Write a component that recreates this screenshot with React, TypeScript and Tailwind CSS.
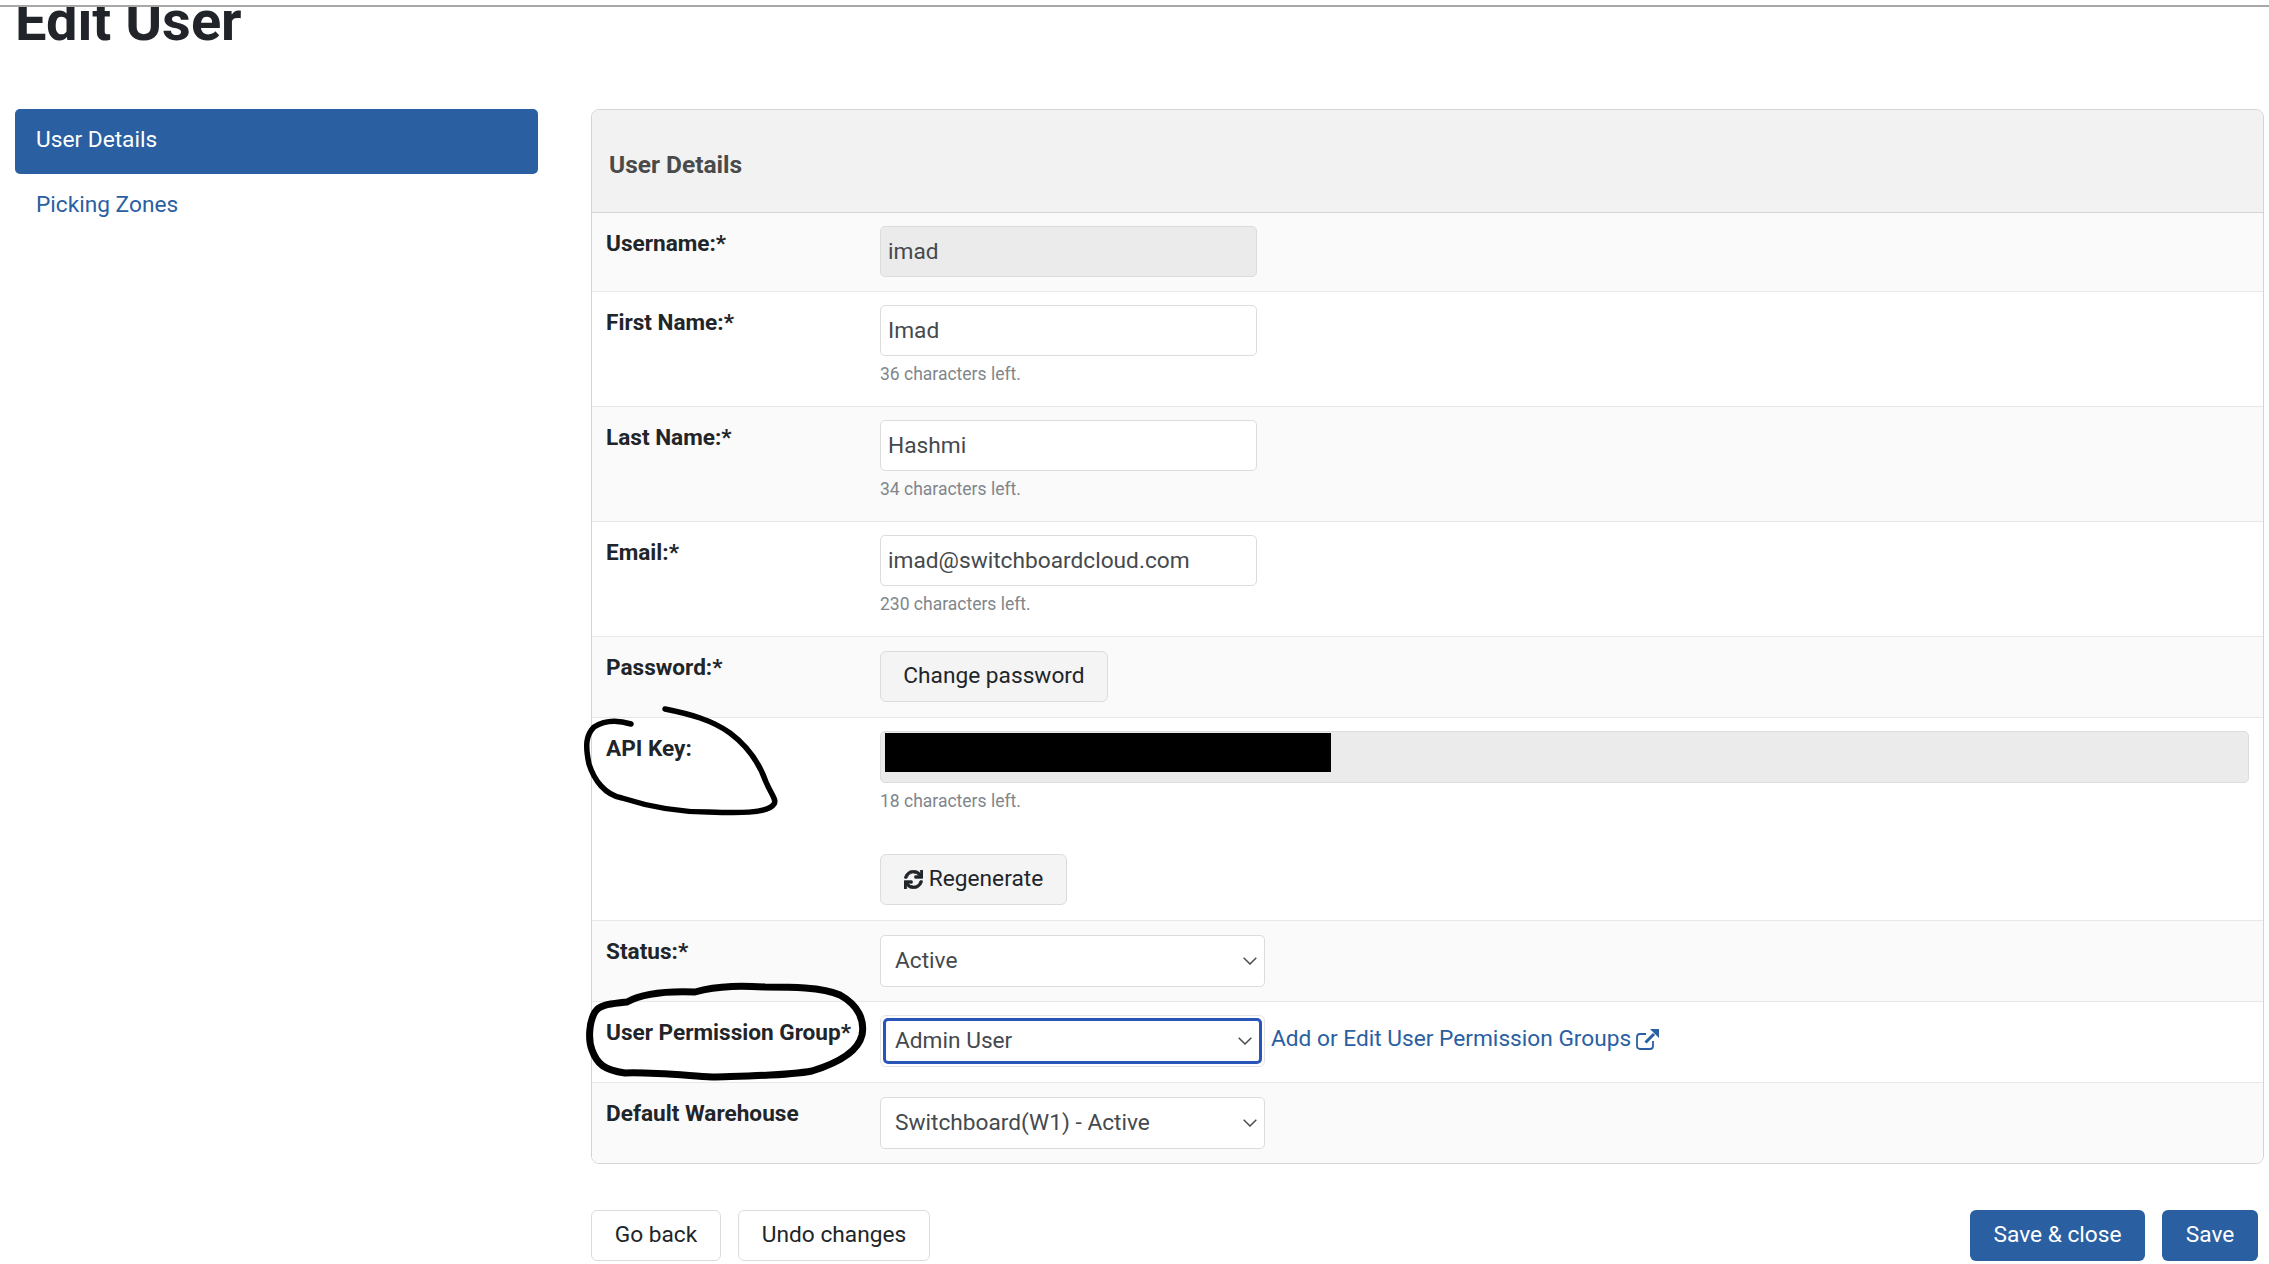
import React from 'react';
import { FaSync } from 'react-icons/fa';

const inputCls = 'block w-[377px] h-[51px] rounded-[5px] border border-[#dcdcdc] px-[7px] text-[22.7px] text-[#45494d] outline-none';
const btnCls = 'inline-flex h-[51px] items-center justify-center rounded-[6px] border border-[#dcdcdc] text-[22.7px] text-[#212529]';

function Chevron() {
  return (
    <svg className="absolute right-[7px] top-1/2 -translate-y-1/2" width="14" height="8" viewBox="0 0 14 8" fill="none">
      <path d="M.7.7 7 7 13.3.7" stroke="#4a4d50" strokeWidth="1.5" />
    </svg>
  );
}

function Select({ value }: { value: string }) {
  return (
    <div className="relative mt-[1px] flex h-[52px] w-[385px] items-center rounded-[5px] border border-[#dcdcdc] bg-white pl-[14px] text-[22.7px] text-[#45494d]">
      {value}
      <Chevron />
    </div>
  );
}

function Hint({ children }: { children: React.ReactNode }) {
  return <div className="mt-[7px] text-[17.5px] leading-[22px] text-[#80868b]">{children}</div>;
}

function Row({ label, alt, h, children }: { label: string; alt?: boolean; h: string; children: React.ReactNode }) {
  return (
    <div className={`flex border-b border-[#e8e8e8] pt-[13px] last:border-b-0 ${alt ? 'bg-[#fafafa]' : 'bg-white'} ${h}`}>
      <div className="w-[288px] shrink-0 pl-[14px] pt-[3px] text-[22.6px] font-bold leading-[30px] text-[#212529]">{label}</div>
      <div className="min-w-0 flex-1 pr-[14px]">{children}</div>
    </div>
  );
}

function TextField({ value, hint, disabled }: { value: string; hint?: string; disabled?: boolean }) {
  return (
    <>
      <input readOnly value={value} className={`${inputCls} ${disabled ? 'bg-[#ebebeb]' : 'bg-white'}`} />
      {hint && <Hint>{hint}</Hint>}
    </>
  );
}

export default function App() {
  return (
    <div className="relative h-[1264px] w-[2269px] overflow-hidden bg-white font-['Roboto',sans-serif]">
      <div className="relative z-10 h-[7px] border-b-2 border-[#a8a8a8] bg-white" />
      <h1 className="-mt-[17px] ml-[15px] text-[56px] font-bold leading-[62px] text-[#212529]">Edit User</h1>

      <div className="mt-[57px] flex pl-[15px] pr-[5px]">
        <nav className="w-[523px] shrink-0">
          <div className="flex h-[65px] items-center rounded-[5px] bg-[#2a5fa2] pb-[2px] pl-[21px] text-[22.7px] text-white">User Details</div>
          <div className="mt-[8px] pl-[21px] text-[22.7px] leading-[46px] text-[#2a5fa2]">Picking Zones</div>
        </nav>

        <div className="ml-[53px] flex-1">
          <div className="overflow-hidden rounded-[8px] border border-[#d4d4d4]">
            <div className="flex h-[103px] items-center border-b border-[#d4d4d4] bg-[#f2f2f2] pl-[17px] pt-[8px] text-[24.5px] font-bold text-[#4a4a4a]">User Details</div>
            <Row label="Username:*" alt h="h-[79px]"><TextField value="imad" disabled /></Row>
            <Row label="First Name:*" h="h-[115px]"><TextField value="Imad" hint="36 characters left." /></Row>
            <Row label="Last Name:*" alt h="h-[115px]"><TextField value="Hashmi" hint="34 characters left." /></Row>
            <Row label="Email:*" h="h-[115px]"><TextField value="imad@switchboardcloud.com" hint="230 characters left." /></Row>
            <Row label="Password:*" alt h="h-[81px]">
              <button className={`${btnCls} mt-[1px] w-[228px] bg-[#f4f4f4]`}>Change password</button>
            </Row>
            <Row label="API Key:" h="h-[203px]">
              <div className="relative h-[52px] w-full rounded-[5px] border border-[#dcdcdc] bg-[#ebebeb]">
                <div className="absolute left-[4px] top-[1px] h-[39px] w-[446px] bg-black" />
              </div>
              <Hint>18 characters left.</Hint>
              <button className={`${btnCls} mt-[42px] w-[187px] gap-[6px] bg-[#f4f4f4]`}>
                <FaSync className="h-[19px] w-[19px] stroke-[#212529] stroke-[20px]" />
                Regenerate
              </button>
            </Row>
            <Row label="Status:*" alt h="h-[81px]"><Select value="Active" /></Row>
            <Row label="User Permission Group*" h="h-[81px]">
              <div className="flex items-center">
                <div className="h-[52px] w-[385px] rounded-[6px] border border-[#e4e4e4] bg-white p-[2px]">
                  <div className="relative flex h-full items-center rounded-[5px] border-[3px] border-[#2a55b8] pl-[9px] text-[22.7px] text-[#45494d]">
                    Admin User
                    <Chevron />
                  </div>
                </div>
                <a className="ml-[6px] flex items-center gap-[5px] pb-[3px] text-[22.7px] text-[#2a5fa2]">
                  Add or Edit User Permission Groups
                  <svg width="23" height="21" viewBox="0 0 23 21" fill="none" stroke="#2a5fa2">
                    <path d="M17 12v5a3 3 0 0 1-3 3H4a3 3 0 0 1-3-3V8a3 3 0 0 1 3-3h6" strokeWidth="1.8" />
                    <path d="M9.5 13.5 18 5" strokeWidth="3" />
                    <path d="M14 0h9v9z" fill="#2a5fa2" stroke="none" />
                  </svg>
                </a>
              </div>
            </Row>
            <Row label="Default Warehouse" alt h="h-[80px]"><Select value="Switchboard(W1) - Active" /></Row>
          </div>

          <div className="mt-[46px] flex items-center pr-[6px]">
            <button className={`${btnCls} w-[130px] bg-white`}>Go back</button>
            <button className={`${btnCls} ml-[17px] w-[192px] bg-white`}>Undo changes</button>
            <button className="ml-auto h-[51px] w-[175px] rounded-[6px] bg-[#2a5fa2] text-[22.7px] text-white">Save &amp; close</button>
            <button className="ml-[17px] h-[51px] w-[96px] rounded-[6px] bg-[#2a5fa2] text-[22.7px] text-white">Save</button>
          </div>
        </div>
      </div>

      {/* hand drawn annotations on top of the screenshot */}
      <svg className="pointer-events-none absolute left-0 top-0" width="2269" height="1264" fill="none" stroke="#000" strokeLinecap="round" strokeLinejoin="round">
        <path strokeWidth="5.5" d="M665 709C690 714 712 720 730 733C750 748 760 765 766 782C771 794 777 800 774 804C768 814 735 813 708 812C680 812 650 807 622 798C605 795 594 780 589 764C585 745 586 735 594 727C605 720 618 720 631 724" />
        <path strokeWidth="7" d="M627 1002C612 1004 600 1004 595 1012C589 1022 588 1040 592 1050C597 1064 604 1070 625 1073C650 1072 680 1075 712 1077C745 1076 785 1076 812 1071C838 1063 858 1052 862 1035C865 1020 858 1005 840 995C822 987 790 987 765 987C745 986 720 985 695 992C670 991 645 992 627 1002Z" />
      </svg>
    </div>
  );
}
